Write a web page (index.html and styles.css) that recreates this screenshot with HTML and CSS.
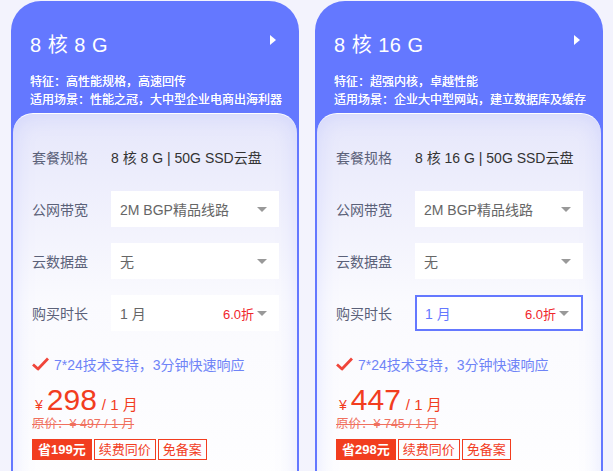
FILE: index.html
```html
<!DOCTYPE html>
<html lang="zh-CN">
<head>
  <meta charset="UTF-8" />
  <meta name="viewport" content="width=device-width, initial-scale=1.0"/>
  <title>云服务器套餐</title>
  <link rel="stylesheet" href="styles.css">
</head>
<body>
  <div class="plans">
    <!-- 8核8G -->
    <div class="plan">
      <div class="plan-head">
        <div class="plan-title">
          <h2>8 核 8 G</h2>
          <span class="arrow-right"></span>
        </div>
        <p>特征：高性能规格，高速回传</p>
        <p>适用场景：性能之冠，大中型企业电商出海利器</p>
      </div>
      <div class="plan-body">
        <div class="row">
          <span class="label">套餐规格</span>
          <span class="value">8 核 8 G | 50G SSD云盘</span>
        </div>
        <div class="row">
          <span class="label">公网带宽</span>
          <div class="select"><span>2M BGP精品线路</span><i class="caret"></i></div>
        </div>
        <div class="row">
          <span class="label">云数据盘</span>
          <div class="select"><span>无</span><i class="caret"></i></div>
        </div>
        <div class="row">
          <span class="label">购买时长</span>
          <div class="select"><span>1 月</span><em class="discount">6.0折</em><i class="caret"></i></div>
        </div>
        <div class="support">
          <svg width="17" height="14" viewBox="0 0 17 14"><path d="M1 7.5 L6 12 L16 1.5" fill="none" stroke="#f0453a" stroke-width="2.8" stroke-linejoin="round"/></svg>
          <span>7*24技术支持，3分钟快速响应</span>
        </div>
        <div class="price">
          <span class="yen">¥</span><span class="amount">298</span><span class="unit">/ 1 月</span>
        </div>
        <div class="origin">原价：¥ 497 / 1 月</div>
        <div class="tags">
          <span class="tag solid">省199元</span>
          <span class="tag">续费同价</span>
          <span class="tag">免备案</span>
        </div>
      </div>
    </div>

    <!-- 8核16G -->
    <div class="plan">
      <div class="plan-head">
        <div class="plan-title">
          <h2>8 核 16 G</h2>
          <span class="arrow-right"></span>
        </div>
        <p>特征：超强内核，卓越性能</p>
        <p>适用场景：企业大中型网站，建立数据库及缓存</p>
      </div>
      <div class="plan-body">
        <div class="row">
          <span class="label">套餐规格</span>
          <span class="value">8 核 16 G | 50G SSD云盘</span>
        </div>
        <div class="row">
          <span class="label">公网带宽</span>
          <div class="select"><span>2M BGP精品线路</span><i class="caret"></i></div>
        </div>
        <div class="row">
          <span class="label">云数据盘</span>
          <div class="select"><span>无</span><i class="caret"></i></div>
        </div>
        <div class="row">
          <span class="label">购买时长</span>
          <div class="select active"><span>1 月</span><em class="discount">6.0折</em><i class="caret"></i></div>
        </div>
        <div class="support">
          <svg width="17" height="14" viewBox="0 0 17 14"><path d="M1 7.5 L6 12 L16 1.5" fill="none" stroke="#f0453a" stroke-width="2.8" stroke-linejoin="round"/></svg>
          <span>7*24技术支持，3分钟快速响应</span>
        </div>
        <div class="price">
          <span class="yen">¥</span><span class="amount">447</span><span class="unit">/ 1 月</span>
        </div>
        <div class="origin">原价：¥ 745 / 1 月</div>
        <div class="tags">
          <span class="tag solid">省298元</span>
          <span class="tag">续费同价</span>
          <span class="tag">免备案</span>
        </div>
      </div>
    </div>
  </div>
</body>
</html>
```

FILE: styles.css
```css
body {
  margin: 0;
  background: #f3f3fd;
  font-family: "Liberation Sans", "Noto Sans CJK SC", sans-serif;
  overflow: hidden;
}

.plans {
  display: flex;
  gap: 16px;
  padding: 1px 0 0 11px;
}

.plan {
  width: 288px;
  height: 520px;
  background: #6478ff;
  border-radius: 30px 30px 0 0;
  padding: 0 2px;
  box-sizing: border-box;
}

.plan-head {
  padding: 31px 10px 0 17px;
  color: #fff;
  height: 81px;
}

.plan-title {
  display: flex;
  justify-content: space-between;
  align-items: center;
  margin-bottom: 15px;
  padding-right: 7px;
}

.plan-title h2 {
  margin: 0;
  font-size: 20px;
  font-weight: normal;
  line-height: 26px;
  letter-spacing: 0.5px;
}

.arrow-right {
  width: 0;
  height: 0;
  border-top: 5px solid transparent;
  border-bottom: 5px solid transparent;
  border-left: 6px solid #fff;
  margin: -10px 4px 0 0;
}

.plan-head p {
  margin: 0;
  font-size: 12px;
  line-height: 18px;
  white-space: nowrap;
  text-shadow: 0 0 0.4px #fff;
}

.plan-body {
  height: 420px;
  border-radius: 20px 20px 0 0;
  border-top: 1.5px solid rgba(255, 255, 255, 0.9);
  background: linear-gradient(180deg, #e6e7fb 0, #fafafe 45%, #fff 100%);
  box-shadow: inset 0 0 22px rgba(110, 125, 255, 0.18);
  padding: 25px 18px 0 19px;
  box-sizing: border-box;
}

.row {
  display: flex;
  align-items: center;
  height: 36px;
  margin-bottom: 16px;
}

.label {
  width: 79px;
  font-size: 14px;
  color: #5b6179;
  flex-shrink: 0;
}

.value {
  font-size: 14px;
  color: #333;
}

.select {
  flex: 1;
  height: 36px;
  background: #fff;
  display: flex;
  align-items: center;
  padding: 0 12px 0 9px;
  box-sizing: border-box;
  font-size: 14px;
  color: #666;
}

.select span {
  flex: 1;
}

.select.active {
  border: 2px solid #6478ff;
  padding-left: 8px;
  color: #6478ff;
}

.discount {
  font-style: normal;
  font-size: 13px;
  color: #f0262c;
  margin-right: 3px;
}

.caret {
  width: 0;
  height: 0;
  border-left: 5px solid transparent;
  border-right: 5px solid transparent;
  border-top: 5px solid #999;
}

.support {
  display: flex;
  align-items: center;
  gap: 5px;
  margin-top: 23px;
  font-size: 14px;
  color: #6f84f7;
}

.price {
  margin-top: 9px;
  color: #f23d1f;
  display: flex;
  align-items: baseline;
  padding-left: 3px;
  height: 32px;
}

.yen {
  font-size: 14px;
  margin-right: 4px;
}

.amount {
  font-size: 30px;
  margin-right: 5px;
}

.unit {
  font-size: 15px;
}

.origin {
  font-size: 12.5px;
  color: #f0705e;
  text-decoration: line-through;
  line-height: 16px;
  margin-top: 1px;
}

.tags {
  display: flex;
  gap: 2px;
  margin-top: 7px;
}

.tag {
  font-size: 13px;
  line-height: 19px;
  padding: 0 4px;
  border: 1px solid #f23d1f;
  color: #f23d1f;
}

.tag.solid {
  background: #f23d1f;
  color: #fff;
  font-weight: bold;
  padding: 0 5px;
}
```
